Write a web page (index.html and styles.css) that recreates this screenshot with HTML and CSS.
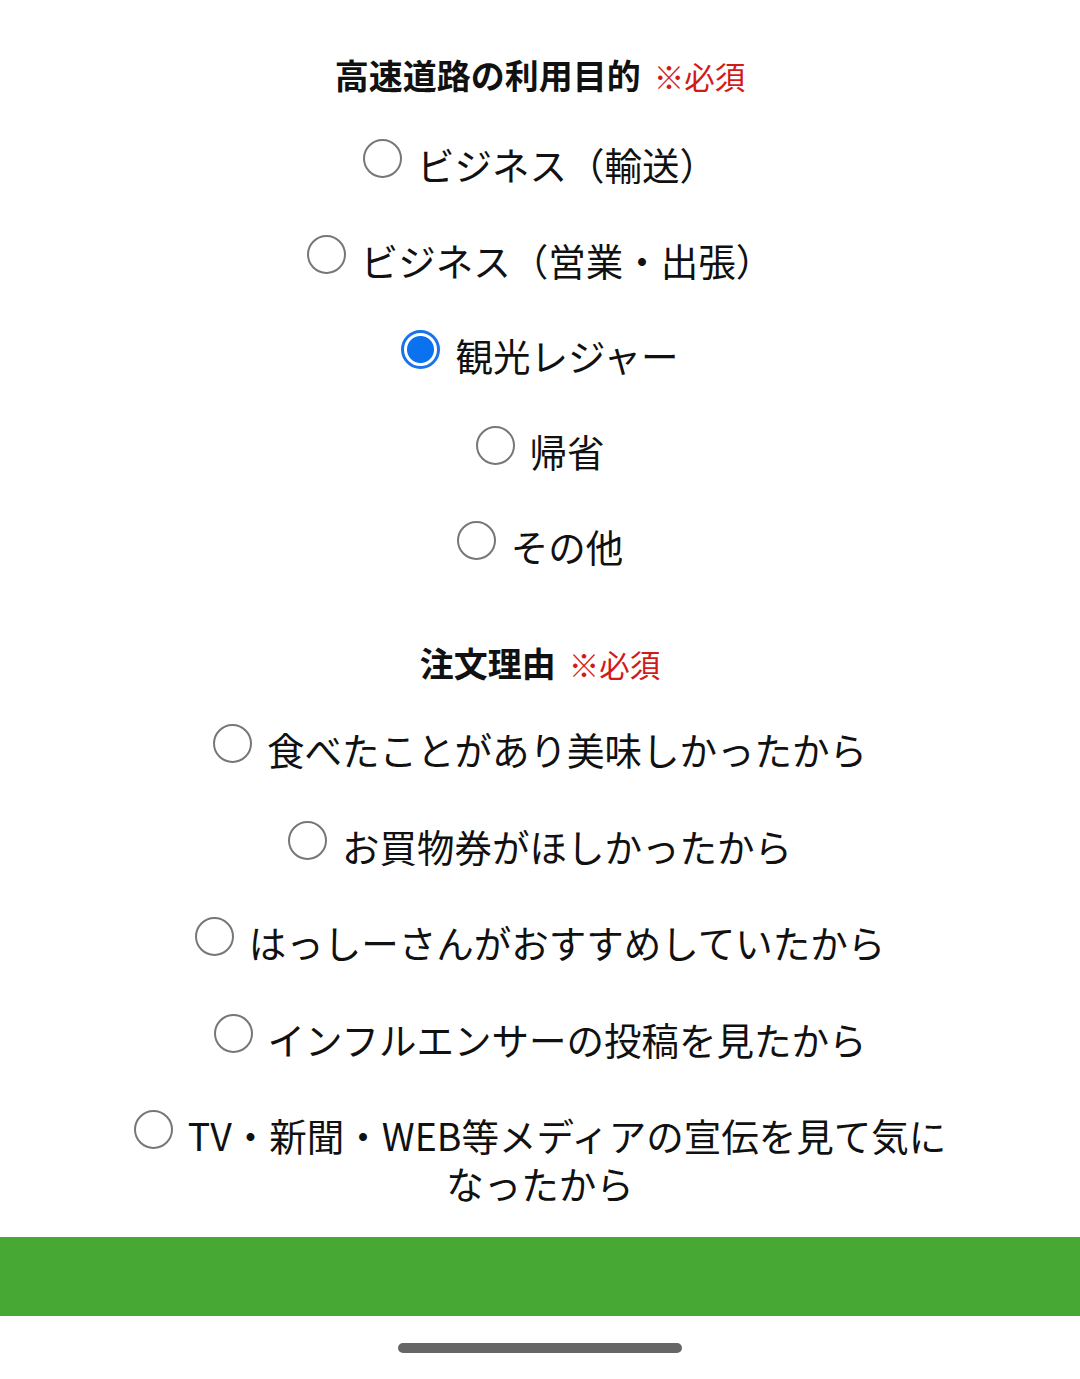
FILE: index.html
```html
<!DOCTYPE html>
<html lang="ja">
<head>
<meta charset="utf-8">
<link rel="stylesheet" href="styles.css">
</head>
<body>
<main class="page">
  <section class="section">
    <h2 class="section-title">高速道路の利用目的<span class="req">※必須</span></h2>
    <div class="options">
      <label class="option"><span class="radio"></span>ビジネス（輸送）</label>
      <label class="option"><span class="radio"></span>ビジネス（営業・出張）</label>
      <label class="option"><span class="radio checked"></span>観光レジャー</label>
      <label class="option"><span class="radio"></span>帰省</label>
      <label class="option"><span class="radio"></span>その他</label>
    </div>
  </section>
  <section class="section section-second">
    <h2 class="section-title">注文理由<span class="req">※必須</span></h2>
    <div class="options options-second">
      <label class="option"><span class="radio"></span>食べたことがあり美味しかったから</label>
      <label class="option"><span class="radio"></span>お買物券がほしかったから</label>
      <label class="option"><span class="radio"></span>はっしーさんがおすすめしていたから</label>
      <label class="option"><span class="radio"></span>インフルエンサーの投稿を見たから</label>
      <label class="option"><span class="radio"></span>TV・新聞・WEB等メディアの宣伝を見て気になったから</label>
    </div>
  </section>
  <div class="green-bar"></div>
  <div class="home-area"><div class="home-indicator"></div></div>
</main>
</body>
</html>
```
FILE: styles.css
```css
html, body {
  margin: 0;
  padding: 0;
  background: #fff;
}
body {
  font-family: "Noto Sans CJK JP", "Noto Sans", sans-serif;
  color: #111;
}
.page {
  padding-top: 51px;
}
.section {
  padding: 0 120px;
}
.section-second {
  margin-top: 69px;
}
.section-title {
  margin: 0;
  font-size: 34px;
  line-height: 48px;
  font-weight: 700;
  text-align: center;
  color: #111;
}
.req {
  font-size: 30.5px;
  font-weight: 400;
  color: #d21a1a;
  margin-left: 13px;
}
.options {
  margin-top: 40px;
  display: flex;
  flex-direction: column;
  gap: 47.5px;
}
.options-second {
  margin-top: 37px;
  gap: 48.5px;
}
.option {
  display: block;
  text-align: center;
  font-size: 37.5px;
  line-height: 48px;
  color: #111;
}
.radio {
  display: inline-block;
  box-sizing: border-box;
  width: 39px;
  height: 39px;
  border: 2.5px solid #777;
  border-radius: 50%;
  vertical-align: 2px;
  margin-top: -6px;
  margin-right: 15px;
}
.radio.checked {
  border: 3px solid #1a73e8;
  background: radial-gradient(circle, #0a72ee 0 13px, #fff 14px);
}
.green-bar {
  margin-top: 30px;
  height: 79px;
  background: #47a834;
}
.home-area {
  height: 63px;
  display: flex;
  justify-content: center;
  padding-top: 27px;
  box-sizing: border-box;
}
.home-indicator {
  width: 284px;
  height: 10px;
  border-radius: 5px;
  background: #666;
}
```
